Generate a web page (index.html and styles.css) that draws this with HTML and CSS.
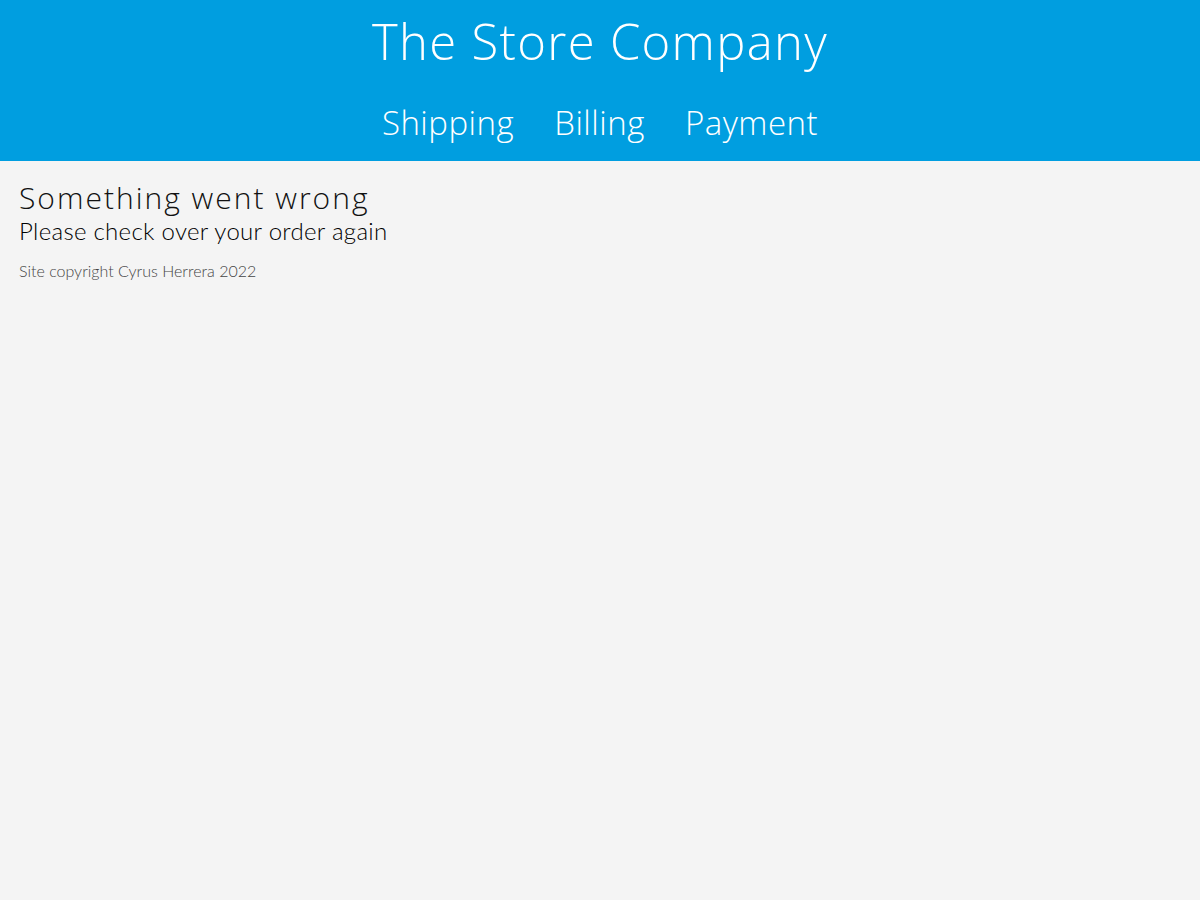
FILE: index.html
```html
<!DOCTYPE html>
<html lang="en">
<head>
<meta charset="utf-8">
<title>The Store Company</title>
<link rel="stylesheet" href="styles.css">
</head>
<body>
<header class="site-header">
  <h1 class="brand">The Store Company</h1>
  <nav class="main-nav">
    <a class="nav-link" href="#">Shipping</a>
    <a class="nav-link" href="#">Billing</a>
    <a class="nav-link" href="#">Payment</a>
  </nav>
</header>
<main class="content">
  <h2 class="error-title">Something went wrong</h2>
  <p class="error-sub">Please check over your order again</p>
  <footer class="site-footer">Site copyright Cyrus Herrera 2022</footer>
</main>
</body>
</html>
```
FILE: styles.css
```css
* { box-sizing: border-box; }
html, body { margin: 0; padding: 0; }
body {
  background: #f4f4f4;
  font-family: Lato, "Liberation Sans", sans-serif;
  font-weight: 300;
  color: #111;
}
.site-header {
  background: #009ee0;
  height: 161px;
  display: flex;
  flex-direction: column;
  align-items: center;
  color: #fff;
}
.brand {
  margin: 0;
  padding-top: 10px;
  font-family: "Open Sans", sans-serif;
  font-weight: 300;
  font-size: 49px;
  line-height: 62px;
  letter-spacing: 1.3px;
}
.main-nav {
  display: flex;
  gap: 40px;
  margin-top: 28px;
}
.nav-link {
  color: #fff;
  text-decoration: none;
  font-family: "Open Sans", sans-serif;
  font-weight: 300;
  font-size: 33px;
  line-height: 46px;
  letter-spacing: 0.5px;
}
.content {
  padding: 19px 19px 18px;
}
.error-title {
  margin: 0;
  font-family: "Open Sans", sans-serif;
  font-weight: 300;
  font-size: 30px;
  line-height: 36px;
  letter-spacing: 2px;
  color: #111;
}
.error-sub {
  margin: 1px 0 0;
  font-size: 24px;
  line-height: 28px;
  font-weight: 300;
  letter-spacing: 0.3px;
  color: #000;
}
.site-footer {
  margin-top: 15px;
  font-size: 16px;
  line-height: 22px;
  color: #444;
}
```
